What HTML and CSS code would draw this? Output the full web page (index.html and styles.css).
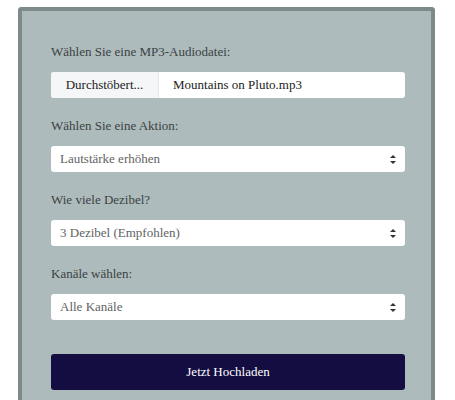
FILE: index.html
```html
<!DOCTYPE html>
<html lang="de">
<head>
<meta charset="utf-8">
<link rel="stylesheet" href="styles.css">
</head>
<body>
<div class="card">
  <form class="form">
    <div class="field">
      <div class="label">Wählen Sie eine MP3-Audiodatei:</div>
      <div class="file">
        <span class="file-btn">Durchstöbert...</span>
        <span class="file-name">Mountains on Pluto.mp3</span>
      </div>
    </div>
    <div class="field">
      <div class="label">Wählen Sie eine Aktion:</div>
      <div class="select"><span>Lautstärke erhöhen</span><span class="arrows"></span></div>
    </div>
    <div class="field">
      <div class="label">Wie viele Dezibel?</div>
      <div class="select"><span>3 Dezibel (Empfohlen)</span><span class="arrows"></span></div>
    </div>
    <div class="field">
      <div class="label">Kanäle wählen:</div>
      <div class="select"><span>Alle Kanäle</span><span class="arrows"></span></div>
    </div>
    <div class="submit">Jetzt Hochladen</div>
  </form>
</div>
</body>
</html>
```
FILE: styles.css
```css
html, body { margin: 0; padding: 0; background: #fff; }
body {
  font-family: "Liberation Serif", "DejaVu Serif", serif;
  font-size: 13px;
  padding: 7px 20px 0 18px;
}
.card {
  background: #aebbbc;
  border: 4px solid #7d8a89;
  border-bottom: none;
  border-radius: 4px 4px 0 0;
  padding: 33px 26px 20px 29px;
  height: 400px;
  box-sizing: border-box;
}
.form { display: flex; flex-direction: column; }
.field { display: flex; flex-direction: column; gap: 12px; margin-bottom: 20px; }
.label { color: #3b4242; line-height: 16px; }
.file, .select {
  height: 26px;
  background: #fff;
  border-radius: 3px;
  display: flex;
  align-items: center;
  box-sizing: border-box;
}
.file-btn {
  width: 108px;
  height: 100%;
  background: #f5f6f8;
  border-right: 1px solid #e6e8ea;
  border-radius: 3px 0 0 3px;
  display: flex;
  align-items: center;
  justify-content: center;
  color: #222;
  box-sizing: border-box;
}
.file-name { padding-left: 14px; color: #222; }
.select { padding: 0 0 0 9px; justify-content: space-between; color: #5f6363; }
.arrows {
  width: 6px; height: 9px; margin-right: 9px;
  position: relative;
}
.arrows::before, .arrows::after {
  content: ""; position: absolute; left: 0;
  border-left: 3px solid transparent; border-right: 3px solid transparent;
}
.arrows::before { top: 0; border-bottom: 3.5px solid #333; }
.arrows::after { bottom: 0; border-top: 3.5px solid #333; }
.submit {
  margin-top: 14px;
  height: 36px;
  background: #130d41;
  color: #fff;
  border-radius: 3px;
  display: flex; align-items: center; justify-content: center;
  font-size: 13px;
}
```
